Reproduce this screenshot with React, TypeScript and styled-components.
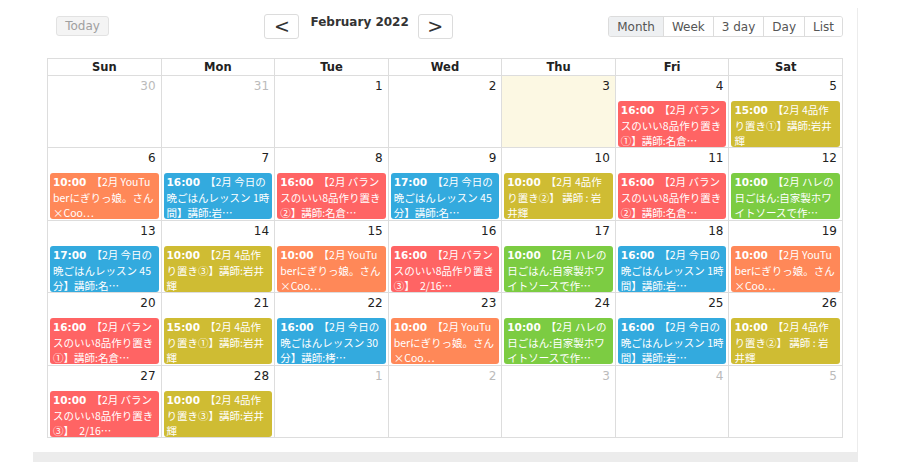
import React from "react";
import styled, { createGlobalStyle } from "styled-components";

const GlobalStyle = createGlobalStyle`
  html, body {
    margin: 0;
    padding: 0;
    background: #fff;
  }
  body {
    font-family: "DejaVu Sans", "Noto Sans CJK JP", sans-serif;
    color: #333;
  }
`;

const Page = styled.div`
  padding: 8px 0 0 33px;
`;

const Panel = styled.div`
  width: 796px;
  padding: 6px 14px 14px 14px;
  border-right: 1px solid #ececec;
  background: #fff;
`;

const BottomStrip = styled.div`
  width: 825px;
  height: 10px;
  background: #ececec;
`;

const Toolbar = styled.div`
  display: flex;
  align-items: flex-start;
  height: 44px;
`;

const ToolbarSide = styled.div`
  display: flex;
  margin-top: 2px;
`;

const ToolbarCenter = styled.div`
  flex: 1;
  display: flex;
  justify-content: center;
  align-items: flex-start;
`;

const TodayButton = styled.button`
  margin-left: 9px;
  height: 20px;
  width: 53px;
  padding: 0;
  font: 12px "DejaVu Sans", sans-serif;
  color: #a0a0a0;
  background: #f4f4f4;
  border: 1px solid #e2e2e2;
  border-radius: 3px;
`;

const NavButton = styled.button`
  width: 35px;
  height: 25px;
  padding: 0 0 2px;
  font: 19px "DejaVu Sans", sans-serif;
  line-height: 20px;
  color: #333;
  background: #fff;
  border: 1px solid #dcdcdc;
  border-radius: 3px;
`;

const Title = styled.h2`
  margin: 0 9px 0 11px;
  padding-top: 1px;
  font: bold 12px "DejaVu Sans", sans-serif;
  line-height: 14px;
  color: #333;
`;

const ViewGroup = styled.div`
  display: flex;
  border: 1px solid #dcdcdc;
  border-radius: 3px;
  overflow: hidden;
`;

const ViewButton = styled.button<{ $active?: boolean }>`
  height: 19px;
  padding: 0 8px;
  font: 12px "DejaVu Sans", sans-serif;
  color: #555;
  background: ${(p) => (p.$active ? "#eef0f2" : "#fff")};
  border: none;
  border-left: 1px solid #dcdcdc;
  &:first-child {
    border-left: none;
  }
`;

const Grid = styled.div`
  display: grid;
  grid-template-columns: repeat(7, 1fr);
  grid-template-rows: 17px repeat(5, 72.4px);
  border-left: 1px solid #ddd;
  border-top: 1px solid #ddd;
`;

const HeadCell = styled.div`
  border-right: 1px solid #ddd;
  border-bottom: 1px solid #ddd;
  font: bold 11.5px "DejaVu Sans", sans-serif;
  line-height: 16px;
  text-align: center;
  color: #222;
`;

const DayCell = styled.div<{ $today?: boolean }>`
  display: flex;
  flex-direction: column;
  min-width: 0;
  border-right: 1px solid #ddd;
  border-bottom: 1px solid #ddd;
  background: ${(p) => (p.$today ? "#fcf8e3" : "#fff")};
`;

const DayNumber = styled.div<{ $other?: boolean }>`
  height: 25px;
  padding: 3px 5px 0 0;
  box-sizing: border-box;
  text-align: right;
  font: 12px "DejaVu Sans", sans-serif;
  line-height: 15px;
  color: ${(p) => (p.$other ? "#bbb" : "#222")};
`;

const Event = styled.div<{ $color: string }>`
  margin: 0 2px 0 2px;
  height: 46px;
  padding: 1px 0 0 3px;
  box-sizing: border-box;
  border-radius: 3px;
  background: ${(p) => p.$color};
  color: #fff;
  font: 10.5px "Noto Sans CJK JP", sans-serif;
  line-height: 15px;
  overflow: hidden;
`;

const EventLine = styled.div`
  white-space: nowrap;
`;

const Time = styled.b`
  font-family: "DejaVu Sans", sans-serif;
  font-weight: bold;
  font-size: 10.5px;
  margin-right: 5px;
`;

const COLORS = {
  red: "#ff6464",
  olive: "#cfbc33",
  orange: "#ff8858",
  blue: "#33aade",
  green: "#7ccc42",
};

type Ev = { color: string; time: string; lines: [string, string, string] };

const balance = (time: string, n: string, third?: string): Ev => ({
  color: COLORS.red,
  time,
  lines: ["【2月 バラン", "スのいい8品作り置き", third ?? `${n}】講師:名倉…`],
});
const yotsu = (time: string, n: string, spaced?: boolean): Ev => ({
  color: COLORS.olive,
  time,
  lines: spaced
    ? ["【2月 4品作", `り置き${n}】 講師 : 岩`, "井輝"]
    : ["【2月 4品作", `り置き${n}】講師:岩井`, "輝"],
});
const youtube = (time: string): Ev => ({
  color: COLORS.orange,
  time,
  lines: ["【2月 YouTu", "berにぎりっ娘。さん", "×Coo…"],
});
const bangohan = (time: string, len: string, rest: string): Ev => ({
  color: COLORS.blue,
  time,
  lines: ["【2月 今日の", `晩ごはんレッスン ${len.slice(0, 2)}`, `${len.slice(2)}】講師:${rest}…`],
});
const hare = (time: string): Ev => ({
  color: COLORS.green,
  time,
  lines: ["【2月 ハレの", "日ごはん:自家製ホワ", "イトソースで作…"],
});

type Day = { n: number; other?: boolean; today?: boolean; ev?: Ev };

const days: Day[] = [
  { n: 30, other: true },
  { n: 31, other: true },
  { n: 1 },
  { n: 2 },
  { n: 3, today: true },
  { n: 4, ev: balance("16:00", "①") },
  { n: 5, ev: yotsu("15:00", "①") },

  { n: 6, ev: youtube("10:00") },
  { n: 7, ev: bangohan("16:00", "1時間", "岩") },
  { n: 8, ev: balance("16:00", "②") },
  { n: 9, ev: bangohan("17:00", "45分", "名") },
  { n: 10, ev: yotsu("10:00", "②", true) },
  { n: 11, ev: balance("16:00", "②") },
  { n: 12, ev: hare("10:00") },

  { n: 13, ev: bangohan("17:00", "45分", "名") },
  { n: 14, ev: yotsu("10:00", "③") },
  { n: 15, ev: youtube("10:00") },
  { n: 16, ev: balance("16:00", "③", "③】　2/16…") },
  { n: 17, ev: hare("10:00") },
  { n: 18, ev: bangohan("16:00", "1時間", "岩") },
  { n: 19, ev: youtube("10:00") },

  { n: 20, ev: balance("16:00", "①") },
  { n: 21, ev: yotsu("15:00", "①") },
  { n: 22, ev: bangohan("16:00", "30分", "栲") },
  { n: 23, ev: youtube("10:00") },
  { n: 24, ev: hare("10:00") },
  { n: 25, ev: bangohan("16:00", "1時間", "岩") },
  { n: 26, ev: yotsu("10:00", "②", true) },

  { n: 27, ev: balance("10:00", "③", "③】　2/16…") },
  { n: 28, ev: yotsu("10:00", "③") },
  { n: 1, other: true },
  { n: 2, other: true },
  { n: 3, other: true },
  { n: 4, other: true },
  { n: 5, other: true },
];

const weekdays = ["Sun", "Mon", "Tue", "Wed", "Thu", "Fri", "Sat"];
const views = ["Month", "Week", "3 day", "Day", "List"];

const EventChip: React.FC<{ ev: Ev }> = ({ ev }) => (
  <Event $color={ev.color}>
    <EventLine>
      <Time>{ev.time}</Time>
      {ev.lines[0]}
    </EventLine>
    <EventLine>{ev.lines[1]}</EventLine>
    <EventLine>{ev.lines[2]}</EventLine>
  </Event>
);

const App: React.FC = () => (
  <>
    <GlobalStyle />
    <Page>
      <Panel>
        <Toolbar>
          <ToolbarSide>
            <TodayButton disabled>Today</TodayButton>
          </ToolbarSide>
          <ToolbarCenter>
            <NavButton>&lt;</NavButton>
            <Title>February 2022</Title>
            <NavButton>&gt;</NavButton>
          </ToolbarCenter>
          <ToolbarSide>
            <ViewGroup>
              {views.map((v) => (
                <ViewButton key={v} $active={v === "Month"}>
                  {v}
                </ViewButton>
              ))}
            </ViewGroup>
          </ToolbarSide>
        </Toolbar>
        <Grid>
          {weekdays.map((d) => (
            <HeadCell key={d}>{d}</HeadCell>
          ))}
          {days.map((d, i) => (
            <DayCell key={i} $today={d.today}>
              <DayNumber $other={d.other}>{d.n}</DayNumber>
              {d.ev && <EventChip ev={d.ev} />}
            </DayCell>
          ))}
        </Grid>
      </Panel>
      <BottomStrip />
    </Page>
  </>
);

export default App;
